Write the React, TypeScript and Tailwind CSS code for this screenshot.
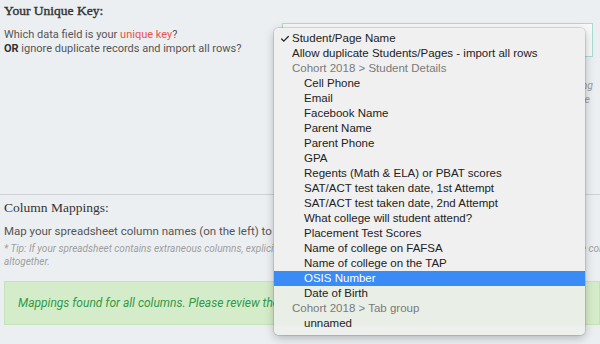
import { Check } from 'lucide-react';

type Row = { label: string; kind: 'top' | 'group' | 'item'; checked?: boolean; active?: boolean };

const ROWS: Row[] = [
  { label: 'Student/Page Name', kind: 'top', checked: true },
  { label: 'Allow duplicate Students/Pages - import all rows', kind: 'top' },
  { label: 'Cohort 2018 > Student Details', kind: 'group' },
  { label: 'Cell Phone', kind: 'item' },
  { label: 'Email', kind: 'item' },
  { label: 'Facebook Name', kind: 'item' },
  { label: 'Parent Name', kind: 'item' },
  { label: 'Parent Phone', kind: 'item' },
  { label: 'GPA', kind: 'item' },
  { label: 'Regents (Math & ELA) or PBAT scores', kind: 'item' },
  { label: 'SAT/ACT test taken date, 1st Attempt', kind: 'item' },
  { label: 'SAT/ACT test taken date, 2nd Attempt', kind: 'item' },
  { label: 'What college will student attend?', kind: 'item' },
  { label: 'Placement Test Scores', kind: 'item' },
  { label: 'Name of college on FAFSA', kind: 'item' },
  { label: 'Name of college on the TAP', kind: 'item' },
  { label: 'OSIS Number', kind: 'item', active: true },
  { label: 'Date of Birth', kind: 'item' },
  { label: 'Cohort 2018 > Tab group', kind: 'group' },
  { label: 'unnamed', kind: 'item' },
];

const heading = "font-['Liberation_Serif',serif] text-[13.5px] leading-[20px] text-[#333]";

// native select popup, drawn open over the form
function SelectMenu() {
  return (
    <div className="absolute left-[274px] top-[28px] w-[311px] rounded-[5px] bg-[linear-gradient(to_bottom,#f0f0f0_254px,#e9efe6_254px,#e9efe6_298px,#eef0ee_298px)] pt-[3px] pb-[4px] shadow-[0_0_0_1px_rgba(0,0,0,0.1),0_3px_10px_rgba(0,0,0,0.25)] font-['Liberation_Sans',sans-serif] text-[11.5px]">
      {ROWS.map((r) => (
        <div
          key={r.label}
          className={`relative flex h-[15px] items-center whitespace-nowrap leading-[15px] ${
            r.active ? 'bg-[#3a8bf6] text-white' : r.kind === 'group' ? 'text-[#7a7a7a]' : 'text-[#222]'
          } ${r.kind === 'item' ? 'pl-[30px]' : 'pl-[18px]'}`}
        >
          {r.checked && (
            <Check className="absolute left-[6px] top-[3px] h-[10px] w-[10px] text-[#222]" strokeWidth={3} />
          )}
          {r.label}
        </div>
      ))}
    </div>
  );
}

export default function App() {
  return (
    <div className="relative h-[344px] w-[600px] overflow-hidden bg-[#eceff1] font-['Roboto',sans-serif] text-[#555]">
      <div className="h-[195px] border-b border-[#cfd3d6] pl-[4px]">
        <h2 className={`pt-[1px] ${heading}`}>
          <span className="[-webkit-text-stroke:0.4px_#333]">Your Unique Key:</span>
        </h2>
        <div className="flex">
          <div className="w-[278px] pt-[7px] text-[11px] leading-[14px]">
            <p>
              Which data field is your <span className="text-[#e8534a]">unique key</span>?
            </p>
            <p>
              <span className="font-bold text-[#333]">OR</span> ignore duplicate records and import all rows?
            </p>
          </div>
          <div className="flex-1 pt-[2px]">
            <div className="h-[34px] w-[311px] border border-[#a9dbd2] bg-[#f7f8f8]" />
            <div className="mt-[22px] w-[311px] text-right text-[10.5px] italic leading-[14px] text-[#9a9a9a]">
              <p className="whitespace-nowrap">Existing records are matched on this field while importing</p>
              <p className="whitespace-nowrap pr-[3px]">and are updated instead of imported a second time</p>
            </div>
          </div>
        </div>
      </div>

      <div className="pl-[4px]">
        <h2 className={`pt-[3px] ${heading}`}>Column Mappings:</h2>
        <p className="mt-[5px] whitespace-nowrap text-[11.5px] leading-[16px]">
          Map your spreadsheet column names (on the left) to the data fields.
        </p>
        <p className="mt-[3px] whitespace-nowrap text-[10px] italic leading-[13px] text-[#9e9e9e]">
          * Tip: If your spreadsheet contains extraneous columns, explicitly set them to be skipped in the mapping below, or you should delete the columns
          <br />
          altogether.
        </p>
        <div className="mt-[13px] flex h-[44px] items-center border border-[#c5e3b8] bg-[#d5ecca] pl-[13px]">
          <p className="whitespace-nowrap text-[12px] italic text-[#2f9a48]">
            Mappings found for all columns. Please review them below.
          </p>
        </div>
      </div>

      <SelectMenu />
    </div>
  );
}
